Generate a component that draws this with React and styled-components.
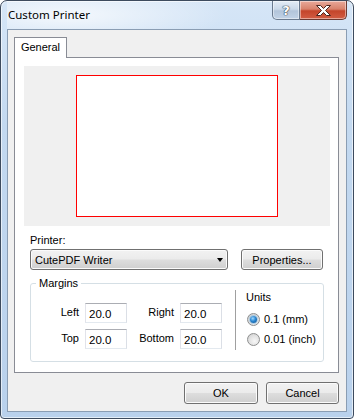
import styled, { createGlobalStyle } from "styled-components";

const GlobalStyle = createGlobalStyle`
  body {
    margin: 0;
    background: #ffffff;
    font-family: "Liberation Sans", Arial, sans-serif;
  }
`;

const Window = styled.div`
  width: 354px;
  height: 419px;
  box-sizing: border-box;
  display: flex;
  flex-direction: column;
  padding: 0 6px 6px;
  border: 1px solid #3d4b5e;
  border-radius: 7px 7px 4px 4px;
  background: linear-gradient(180deg, #d6e6f7 0%, #c3d9f0 30%, #b9d1ec 100%);
  box-shadow: inset 0 0 0 1px rgba(255, 255, 255, 0.6);
  overflow: hidden;
`;

const TitleBar = styled.div`
  height: 28px;
  display: flex;
  align-items: flex-start;
  padding-left: 1px;
  background: radial-gradient(ellipse 160px 30px at 60px 14px, rgba(255, 255, 255, 0.75), rgba(255, 255, 255, 0));
`;

const TitleText = styled.span`
  margin-top: 6px;
  font-family: "Noto Sans", "Open Sans", sans-serif;
  font-size: 11.5px;
  line-height: 16px;
  color: #000;
`;

const CaptionButtons = styled.div`
  margin-left: auto;
  display: flex;
`;

const CaptionButton = styled.div`
  height: 19px;
  box-sizing: border-box;
  display: flex;
  align-items: center;
  justify-content: center;
  border: 1px solid ${(p) => (p.close ? "#6b3a33" : "#6a7a8e")};
  border-top: none;
  width: ${(p) => (p.close ? "47px" : "28px")};
  border-radius: ${(p) => (p.close ? "0 0 5px 0" : "0 0 0 5px")};
  border-left: ${(p) => (p.close ? "none" : "1px solid #6a7a8e")};
  background: ${(p) =>
    p.close
      ? "linear-gradient(180deg, #e9a99a 0%, #d8826c 45%, #c4452b 55%, #d25d44 100%)"
      : "linear-gradient(180deg, #e3ecf6 0%, #cbd9e9 45%, #b3c5da 55%, #c2d3e6 100%)"};
  box-shadow: inset 0 0 0 1px rgba(255, 255, 255, 0.45);
`;

const HelpGlyph = styled.span`
  font-family: "DejaVu Sans", sans-serif;
  font-weight: bold;
  font-size: 13px;
  line-height: 13px;
  color: #fff;
  text-shadow: 0 0 1px #2e3a48, 0 0 1px #2e3a48, 0 0 1px #2e3a48;
`;

const Client = styled.div`
  flex: 1;
  display: flex;
  flex-direction: column;
  padding: 7px 7px 7px 6px;
  border: 1px solid #8a9db3;
  background: #f0f0f0;
`;

const TabStrip = styled.div`
  display: flex;
`;

const Tab = styled.div`
  position: relative;
  z-index: 1;
  width: 53px;
  height: 21px;
  box-sizing: border-box;
  margin-bottom: -1px;
  border: 1px solid #898c95;
  border-bottom: none;
  background: #ffffff;
  font-size: 11px;
  line-height: 19px;
  text-align: center;
  color: #000;
`;

const TabPanel = styled.div`
  height: 316px;
  box-sizing: border-box;
  border: 1px solid #898c95;
  background: #ffffff;
  padding: 8px 8px 0 9px;
`;

const Preview = styled.div`
  height: 160px;
  display: flex;
  align-items: center;
  justify-content: center;
  background: #f0f0f0;
`;

const Paper = styled.div`
  width: 202px;
  height: 142px;
  box-sizing: border-box;
  border: 1px solid #ff0000;
  background: #ffffff;
`;

const FormArea = styled.div`
  width: 294px;
  margin-left: 6px;
  font-size: 11px;
  color: #000;
`;

const FieldLabel = styled.div`
  margin-top: 8px;
  line-height: 13px;
`;

const ComboRow = styled.div`
  margin-top: 2px;
  display: flex;
  gap: 13px;
`;

const buttonFace = `
  box-sizing: border-box;
  border: 1px solid #707070;
  border-radius: 3px;
  background: linear-gradient(180deg, #f2f2f2 0%, #ebebeb 48%, #dddddd 52%, #cfcfcf 100%);
  box-shadow: inset 0 0 0 1px #fbfbfb;
  font-family: "Liberation Sans", Arial, sans-serif;
  font-size: 11px;
  color: #000;
`;

const Combo = styled.div`
  ${buttonFace}
  width: 198px;
  height: 21px;
  display: flex;
  align-items: center;
  padding-left: 4px;
`;

const Arrow = styled.span`
  margin-left: auto;
  margin-right: 4px;
  width: 0;
  height: 0;
  border-left: 3.5px solid transparent;
  border-right: 3.5px solid transparent;
  border-top: 4px solid #000;
`;

const Button = styled.button`
  ${buttonFace}
  width: ${(p) => p.$w}px;
  height: ${(p) => p.$h}px;
  padding: 0;
`;

const Group = styled.fieldset`
  margin: 7px 0 0;
  padding: 0 0 11px;
  min-width: 0;
  border: 1px solid #d5dfe5;
  border-radius: 3px;
`;

const Legend = styled.legend`
  margin-left: 5px;
  padding: 0 3px;
  line-height: 13px;
`;

const GroupBody = styled.div`
  display: flex;
  align-items: flex-start;
`;

const MarginGrid = styled.div`
  margin-top: 13px;
  display: grid;
  grid-template-columns: 48px 42px 41px 42px;
  column-gap: 6px;
  row-gap: 6px;
  align-items: center;
`;

const GridLabel = styled.span`
  text-align: right;
  line-height: 13px;
  margin-top: -2px;
`;

const TextBox = styled.div`
  height: 20px;
  box-sizing: border-box;
  border: 1px solid;
  border-color: #abadb3 #dbdfe6 #e3e9ef #e2e3ea;
  background: #fff;
  font-size: 11.5px;
  line-height: 18px;
  padding-left: 3px;
  padding-top: 1px;
`;

const Separator = styled.div`
  width: 1px;
  height: 60px;
  margin-left: 13px;
  background: #a0a0a0;
`;

const UnitsColumn = styled.div`
  margin-left: 10px;
  display: flex;
  flex-direction: column;
`;

const UnitsLabel = styled.div`
  margin-top: 1px;
  line-height: 13px;
  margin-bottom: 5px;
`;

const RadioRow = styled.div`
  height: 20px;
  display: flex;
  align-items: center;
  gap: 4px;
  margin-left: 1px;
`;

const Radio = styled.span`
  position: relative;
  width: 13px;
  height: 13px;
  box-sizing: border-box;
  border-radius: 50%;
  border: 1px solid #8e8f8f;
  background: radial-gradient(circle at 60% 65%, #f7f7f7 0%, #e1e1e1 55%, #c9c9c9 100%);

  &::after {
    content: "";
    position: absolute;
    left: 2px;
    top: 2px;
    width: 7px;
    height: 7px;
    border-radius: 50%;
    display: ${(p) => (p.checked ? "block" : "none")};
    background: radial-gradient(circle at 40% 35%, #9fd8ff 0%, #2a86d1 45%, #0c4f8c 100%);
    box-shadow: 0 0 1px 1px rgba(82, 160, 220, 0.45);
  }
`;

const ButtonRow = styled.div`
  margin-top: 9px;
  display: flex;
  justify-content: flex-end;
  gap: 8px;
`;

const margins = [
  ["Left", "20.0", "Right", "20.0"],
  ["Top", "20.0", "Bottom", "20.0"],
];

export default function App() {
  return (
    <>
      <GlobalStyle />
      <Window>
        <TitleBar>
          <TitleText>Custom Printer</TitleText>
          <CaptionButtons>
            <CaptionButton>
              <HelpGlyph>?</HelpGlyph>
            </CaptionButton>
            <CaptionButton close>
              <svg width="17" height="11" viewBox="0 0 17 11">
                <path
                  d="M1.5 0.5h4l3 3 3-3h4l-5 5 5 5h-4l-3-3-3 3h-4l5-5z"
                  fill="#ffffff"
                  stroke="#4a2620"
                  strokeWidth="1"
                  strokeLinejoin="round"
                />
              </svg>
            </CaptionButton>
          </CaptionButtons>
        </TitleBar>
        <Client>
          <TabStrip>
            <Tab>General</Tab>
          </TabStrip>
          <TabPanel>
            <Preview>
              <Paper />
            </Preview>
            <FormArea>
              <FieldLabel>Printer:</FieldLabel>
              <ComboRow>
                <Combo>
                  CutePDF Writer
                  <Arrow />
                </Combo>
                <Button $w={82} $h={21}>
                  Properties...
                </Button>
              </ComboRow>
              <Group>
                <Legend>Margins</Legend>
                <GroupBody>
                  <MarginGrid>
                    {margins.map((row) =>
                      row.map((cell, i) =>
                        i % 2 === 0 ? (
                          <GridLabel key={cell}>{cell}</GridLabel>
                        ) : (
                          <TextBox key={row[i - 1] + "v"}>{cell}</TextBox>
                        )
                      )
                    )}
                  </MarginGrid>
                  <Separator />
                  <UnitsColumn>
                    <UnitsLabel>Units</UnitsLabel>
                    <RadioRow>
                      <Radio checked />
                      0.1 (mm)
                    </RadioRow>
                    <RadioRow>
                      <Radio />
                      0.01 (inch)
                    </RadioRow>
                  </UnitsColumn>
                </GroupBody>
              </Group>
            </FormArea>
          </TabPanel>
          <ButtonRow>
            <Button $w={74} $h={22}>
              OK
            </Button>
            <Button $w={73} $h={22}>
              Cancel
            </Button>
          </ButtonRow>
        </Client>
      </Window>
    </>
  );
}
